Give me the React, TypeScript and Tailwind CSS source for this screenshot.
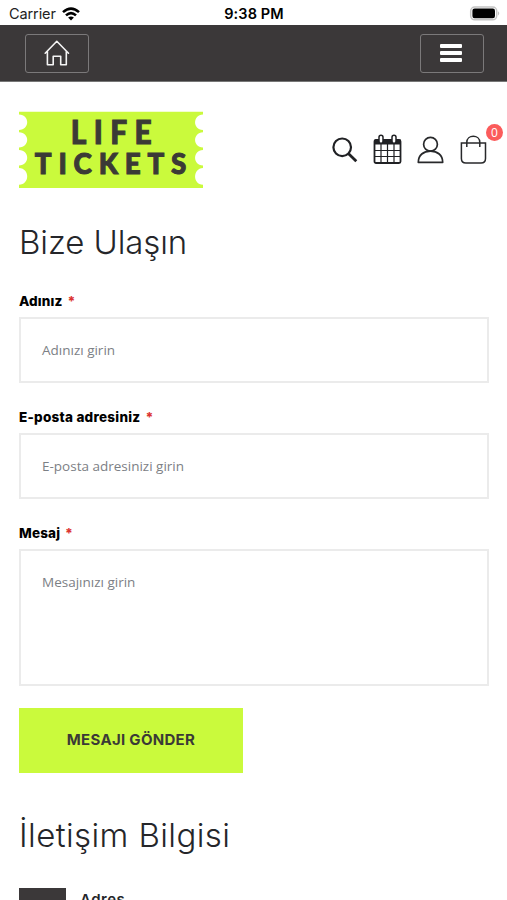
import React from "react";

function StatusBar() {
  return (
    <div className="grid h-[25px] grid-cols-3 items-center pl-[9px] pr-[6px] pt-[2px] text-black">
      <div className="flex items-center gap-[6px]">
        <span className="pt-px text-[14.5px] leading-none tracking-[-0.1px] text-[#222]">Carrier</span>
        <svg width="18" height="14" viewBox="0 0 18 14" fill="none" stroke="#000" strokeWidth="2.6">
          <path d="M1 5.1Q9-2 17 5.1" />
          <path d="M4 8.4Q9 3.8 14 8.4" />
          <path d="M9 13.5 6.1 10.6Q9 8.3 11.9 10.6Z" fill="#000" stroke="none" />
        </svg>
      </div>
      <div className="relative -left-px pt-[2px] text-center text-[14.5px] font-semibold leading-none tracking-[0.1px]">9:38 PM</div>
      <div className="flex items-center justify-end">
        <svg width="32" height="15" viewBox="0 0 32 15">
          <rect x="1.7" y="1" width="26" height="12.8" rx="4" fill="#fff" stroke="#c4c4c4" strokeWidth="1.5" />
          <rect x="3.4" y="2.6" width="22.6" height="9.6" rx="2.2" fill="#000" />
          <path d="M29.2 5.2q2 2.2 0 4.4z" fill="#b5b5b5" />
        </svg>
      </div>
    </div>
  );
}

function NavBar() {
  return (
    <nav className="flex h-[57px] items-center justify-between border-b border-[#777] bg-[#3b3839] pl-[25px] pr-[23px]">
      <button className="flex h-[39px] w-[64px] items-center justify-center rounded-[3px] border border-[#7b797a]">
        <svg width="26" height="26" viewBox="0 0 26 26" fill="none" stroke="#f4f4f4" strokeWidth="1.6" strokeLinejoin="round" strokeLinecap="round">
          <path d="M1.2 13.2 12.8 1.3 24.5 13.2M3.4 11.4V24.7H9.2V16.2H16.7V24.7H22.3V11.4" />
        </svg>
      </button>
      <button className="flex h-[39px] w-[64px] flex-col items-center justify-center gap-[3px] rounded-[3px] border border-[#7b797a] pr-[2px]">
        <span className="h-[4px] w-[22px] rounded-[1px] bg-white" />
        <span className="h-[4px] w-[22px] rounded-[1px] bg-white" />
        <span className="h-[4px] w-[22px] rounded-[1px] bg-white" />
      </button>
    </nav>
  );
}

function Logo() {
  return (
    <svg width="184" height="78" viewBox="0 0 184 78">
      <path
        fill="#cafa3c"
        d="M0 .7H184V3.4C173.500 4 173.500 18.500 184 18.900V21.300C173.500 22 173.500 36 184 36.500V39C173.500 39.600 173.500 54 184 54.500V57C173.500 57.500 173.500 73.500 184 73.800V77H0V73.800C11 73.500 11 57.500 0 57V54.500C11 54 11 39.600 0 39V36.500C11 36 11 22 0 21.300V18.900C11 18.500 11 4 0 3.400Z"
      />
      <g fill="#3b3a36" stroke="#3b3a36" strokeWidth="1" fontFamily="Lato, 'Open Sans', sans-serif" fontWeight="900">
        <text x="51" y="33.300" fontSize="31.500" textLength="85" lengthAdjust="spacing" className="tracking-normal" transform="translate(3.4 0) scale(0.95 1)">LIFE</text>
        <text x="15.800" y="63.500" fontSize="28.500" textLength="155.500" lengthAdjust="spacing" transform="translate(0.4 0) scale(0.975 1)">TICKETS</text>
      </g>
    </svg>
  );
}

function Tools() {
  return (
    <div className="flex items-center">
      <svg width="26" height="26" viewBox="0 0 26 26" fill="none" stroke="#202124">
        <circle cx="10.200" cy="10.300" r="8.800" strokeWidth="2.200" />
        <path d="M16.600 16.800 24.300 24.300" strokeWidth="2.800" />
      </svg>
      <svg className="ml-[15px]" width="29" height="31" viewBox="0 0 29 31" fill="none" stroke="#202124">
        <rect x="1.500" y="6" width="26" height="23" rx="1.500" strokeWidth="1.800" />
        <path d="M1.500 5.500H27.500V10.500H1.500Z" fill="#202124" stroke="none" />
        <path d="M8 10V29M14.500 10V29M21 10V29M2 16.500H27M2 22.500H27" strokeWidth="1.200" />
        <rect x="6" y="1.300" width="4" height="8" rx="2" fill="#fff" strokeWidth="1.500" />
        <rect x="19" y="1.300" width="4" height="8" rx="2" fill="#fff" strokeWidth="1.500" />
      </svg>
      <svg className="ml-[15px]" width="27" height="28" viewBox="0 0 27 28" fill="none" stroke="#28292b" strokeWidth="1.700">
        <circle cx="13.500" cy="8.300" r="6.900" />
        <path d="M1.300 26.300C1.300 19 6.500 15.200 13.500 15.200S25.700 19 25.700 26.300Z" strokeLinejoin="round" />
      </svg>
      <div className="relative ml-[16px]">
        <svg width="27" height="29" viewBox="0 0 27 29" fill="none" stroke="#28292b" strokeWidth="1.500">
          <path d="M1.400 8H25.500V23.500Q25.500 28 21 28H5.900Q1.400 28 1.400 23.500Z" />
          <path d="M6.800 12V7.500C6.800-.8 19.800-.8 19.800 7.500V12" />
        </svg>
        <span className="absolute -top-[11px] left-[26px] flex h-[17px] w-[17px] items-center justify-center rounded-full bg-[#fb5b5b] font-['Open_Sans',sans-serif] text-[12px] leading-none text-white">0</span>
      </div>
    </div>
  );
}

function Label({ children }: { children: React.ReactNode }) {
  return (
    <div className="flex h-[20px] items-center gap-[5px] text-[13.5px] font-extrabold leading-[20px] text-black">
      {children}
      <span className="text-[#dc3532]">*</span>
    </div>
  );
}

export default function App() {
  return (
    <div className="h-[900px] w-[507px] overflow-hidden bg-white font-[Inter,sans-serif]">
      <StatusBar />
      <NavBar />
      <header className="flex h-[106px] items-center justify-between pl-[19px] pr-[20px] pt-[29px]">
        <Logo />
        <Tools />
      </header>
      <main className="pl-[19px] pr-[18px]">
        <h1 className="mt-[31px] h-[46px] whitespace-nowrap text-[33px] font-light leading-[46px] tracking-[-0.1px] text-[#25262a]">Bize Ulaşın</h1>
        <form className="mt-[26px]">
          <Label><span className="tracking-[0.15px]">Adınız</span></Label>
          <div className="mt-[6px] flex h-[66px] items-center border-2 border-[#ebebeb] px-[21px] pt-px font-['Open_Sans',sans-serif] text-[13.5px] text-[#7c8085]">Adınızı girin</div>
          <div className="mt-[24px]">
            <Label><span className="tracking-[0.25px]">E-posta adresiniz</span></Label>
          </div>
          <div className="mt-[6px] flex h-[66px] items-center border-2 border-[#ebebeb] px-[21px] pt-px font-['Open_Sans',sans-serif] text-[13.5px] text-[#7c8085]">E-posta adresinizi girin</div>
          <div className="mt-[24px]">
            <Label><span className="tracking-[0.15px]">Mesaj</span></Label>
          </div>
          <div className="mt-[6px] h-[137px] border-2 border-[#ebebeb] px-[21px] pt-[21px] font-['Open_Sans',sans-serif] text-[13.5px] leading-[20px] text-[#7c8085]">Mesajınızı girin</div>
          <button type="button" className="mt-[22px] flex h-[65px] w-[224px] items-center justify-center bg-[#cafa3c] text-[15px] font-bold text-[#3b3a36]">
            <span className="tracking-[0.3px]">MESAJI GÖNDER</span>
          </button>
        </form>
        <h2 className="mt-[39px] h-[46px] whitespace-nowrap text-[33px] font-light leading-[46px] tracking-[0.4px] text-[#25262a]">İletişim Bilgisi</h2>
        <section className="mt-[30px] flex gap-[14px]">
          <div className="h-[47px] w-[47px] bg-[#3b3839]" />
          <h3 className="pt-px text-[15px] font-semibold leading-[22px] tracking-[0.5px] text-[#25262a]">Adres</h3>
        </section>
      </main>
    </div>
  );
}
